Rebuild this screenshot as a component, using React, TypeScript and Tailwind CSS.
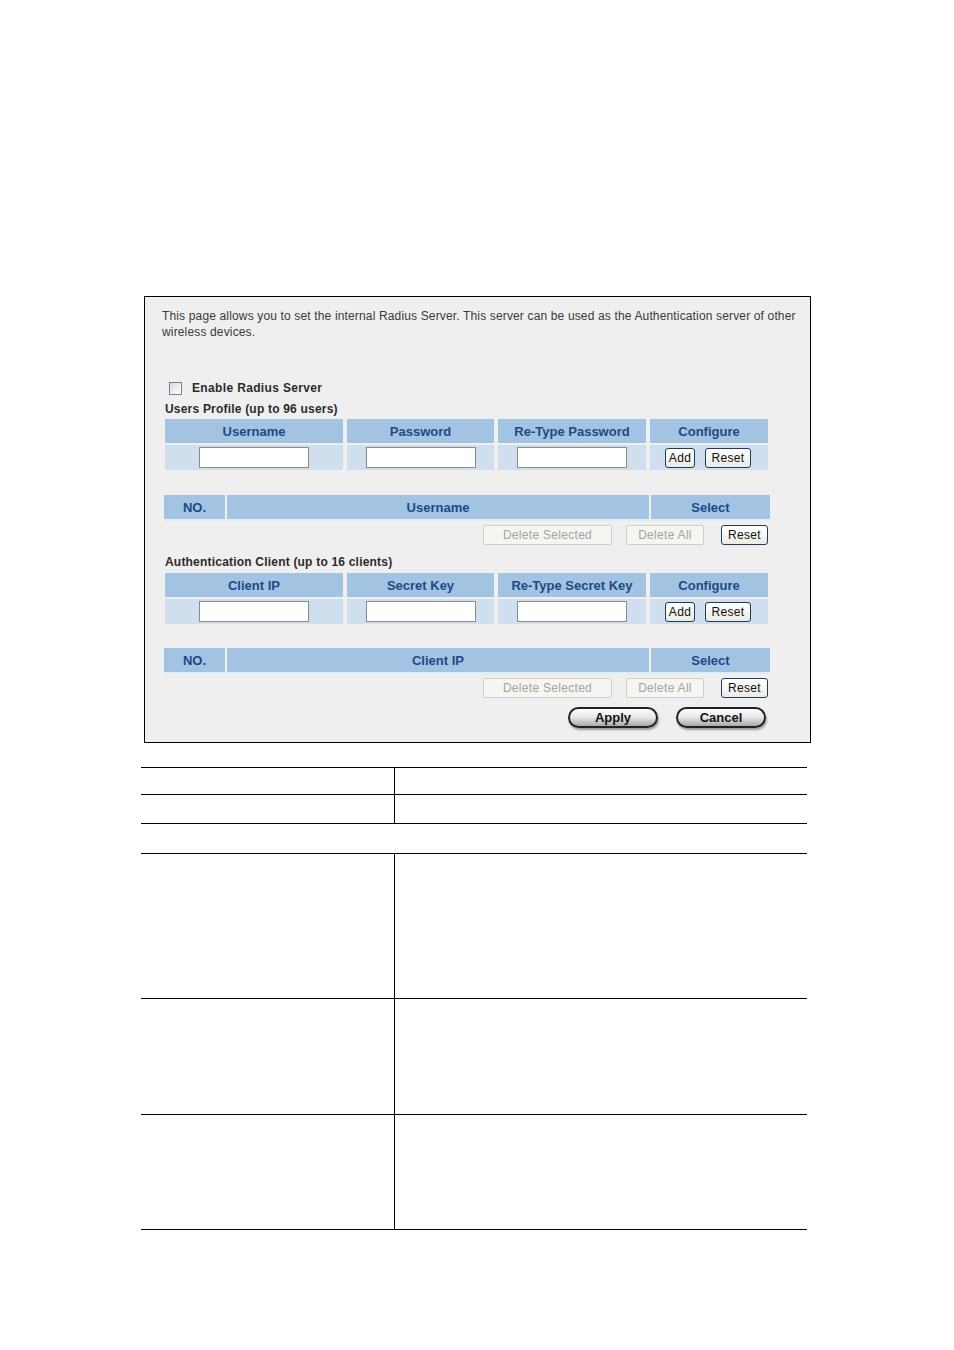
import React from "react";

const font = "font-['Liberation_Sans',Arial,sans-serif]";

function Btn({ label, w, disabled }: { label: string; w: string; disabled?: boolean }) {
  if (disabled) {
    return (
      <div
        className={`${w} h-[20px] flex items-center justify-center rounded-[2px] border border-[#cfcfc6] bg-[#f5f5f1] text-[12px] text-[#a4a4a0] tracking-[0.3px]`}
      >
        {label}
      </div>
    );
  }
  return (
    <div
      className={`${w} h-[20px] flex items-center justify-center rounded-[3px] border border-[#1f3c5e] bg-gradient-to-b from-white to-[#ebebe4] text-[12px] text-[#111] tracking-[0.3px]`}
    >
      {label}
    </div>
  );
}

function TextInput() {
  return <div className="w-[110px] h-[21px] bg-white border border-[#8a8a8a]" />;
}

function Head({ w, children }: { w: string; children: React.ReactNode }) {
  return (
    <div className={`${w} h-[24px] pt-[1px] flex items-center justify-center bg-[#a3c3e2] text-[13px] font-bold text-[#1d4a85]`}>
      {children}
    </div>
  );
}

function Cell({ w, children }: { w: string; children?: React.ReactNode }) {
  return <div className={`${w} h-[25px] flex items-center justify-center bg-[#cfdfee]`}>{children}</div>;
}

function EntryTable({ cols }: { cols: string[] }) {
  return (
    <div className="ml-[1px] flex flex-col gap-[2px]">
      <div className="flex gap-[4px]">
        <Head w="w-[178px]">{cols[0]}</Head>
        <Head w="w-[147px]">{cols[1]}</Head>
        <Head w="w-[148px]">{cols[2]}</Head>
        <Head w="w-[118px]">Configure</Head>
      </div>
      <div className="flex gap-[4px]">
        <Cell w="w-[178px]">
          <TextInput />
        </Cell>
        <Cell w="w-[147px]">
          <TextInput />
        </Cell>
        <Cell w="w-[148px]">
          <TextInput />
        </Cell>
        <Cell w="w-[118px]">
          <div className="flex gap-[10px] -ml-[2px]">
            <Btn label="Add" w="w-[30px]" />
            <Btn label="Reset" w="w-[46px]" />
          </div>
        </Cell>
      </div>
    </div>
  );
}

function ListTable({ middle }: { middle: string }) {
  return (
    <div className="flex flex-col">
      <div className="flex gap-[2px]">
        <Head w="w-[61px]">NO.</Head>
        <Head w="w-[422px]">{middle}</Head>
        <Head w="w-[119px]">Select</Head>
      </div>
      <div className="h-[2px] w-[604px] bg-[#e3ebf3]" />
      <div className="mt-[4px] flex justify-end w-[604px] gap-[14px]">
        <Btn label="Delete Selected" w="w-[129px]" disabled />
        <div className="flex gap-[17px]">
          <Btn label="Delete All" w="w-[78px]" disabled />
          <Btn label="Reset" w="w-[47px]" />
        </div>
      </div>
    </div>
  );
}

function PillBtn({ label }: { label: string }) {
  return (
    <div className="w-[90px] h-[21px] flex items-center justify-center rounded-full border-2 border-[#222] bg-gradient-to-b from-white via-[#e6e6e6] to-[#a9a9a9] shadow-[1px_2px_2px_rgba(0,0,0,0.35)] text-[13px] font-bold text-[#111]">
      {label}
    </div>
  );
}

function DocRow({ h, split = true, last }: { h: string; split?: boolean; last?: boolean }) {
  return (
    <div className={`flex ${h} border-t border-black ${last ? "border-b" : ""}`}>
      {split ? <div className="w-[254px] border-r border-black" /> : null}
      <div className="flex-1" />
    </div>
  );
}

export default function App() {
  return (
    <div className={`w-[954px] min-h-[1350px] bg-white ${font}`}>
      <div className="pt-[296px] pl-[144px]">
        {/* Radius server panel */}
        <div className="w-[667px] h-[447px] border border-black bg-[#efefef] pt-[11px] pl-[19px]">
          <p className="-ml-[2px] w-[640px] text-[12px] leading-[16px] text-[#3a3a3a] tracking-[0.15px]">
            This page allows you to set the internal Radius Server. This server can be used as the Authentication server of other wireless devices.
          </p>

          <div className="mt-[40px] ml-[5px] flex items-center h-[16px]">
            <div className="w-[13px] h-[13px] border border-[#6f829b] bg-gradient-to-br from-[#dcdcd6] to-white" />
            <span className="ml-[10px] text-[12px] font-bold text-[#2b2b2b] tracking-[0.35px]">Enable Radius Server</span>
          </div>
          <div className="mt-[5px] ml-[1px] h-[16px] leading-[16px] text-[12px] font-bold text-[#2b2b2b] tracking-[0.2px]">
            Users Profile (up to 96 users)
          </div>

          <div className="mt-[2px]">
            <EntryTable cols={["Username", "Password", "Re-Type Password"]} />
          </div>

          <div className="mt-[25px]">
            <ListTable middle="Username" />
          </div>

          <div className="mt-[9px] ml-[1px] h-[16px] leading-[16px] text-[12px] font-bold text-[#2b2b2b] tracking-[0.2px]">
            Authentication Client (up to 16 clients)
          </div>

          <div className="mt-[3px]">
            <EntryTable cols={["Client IP", "Secret Key", "Re-Type Secret Key"]} />
          </div>

          <div className="mt-[24px]">
            <ListTable middle="Client IP" />
          </div>

          <div className="mt-[9px] w-[602px] flex justify-end gap-[18px]">
            <PillBtn label="Apply" />
            <PillBtn label="Cancel" />
          </div>
        </div>
      </div>

      {/* Description table */}
      <div className="mt-[24px] ml-[141px] w-[666px] flex flex-col">
        <DocRow h="h-[27px]" />
        <DocRow h="h-[29px]" />
        <DocRow h="h-[30px]" split={false} />
        <DocRow h="h-[145px]" />
        <DocRow h="h-[116px]" />
        <DocRow h="h-[116px]" last />
      </div>
    </div>
  );
}
